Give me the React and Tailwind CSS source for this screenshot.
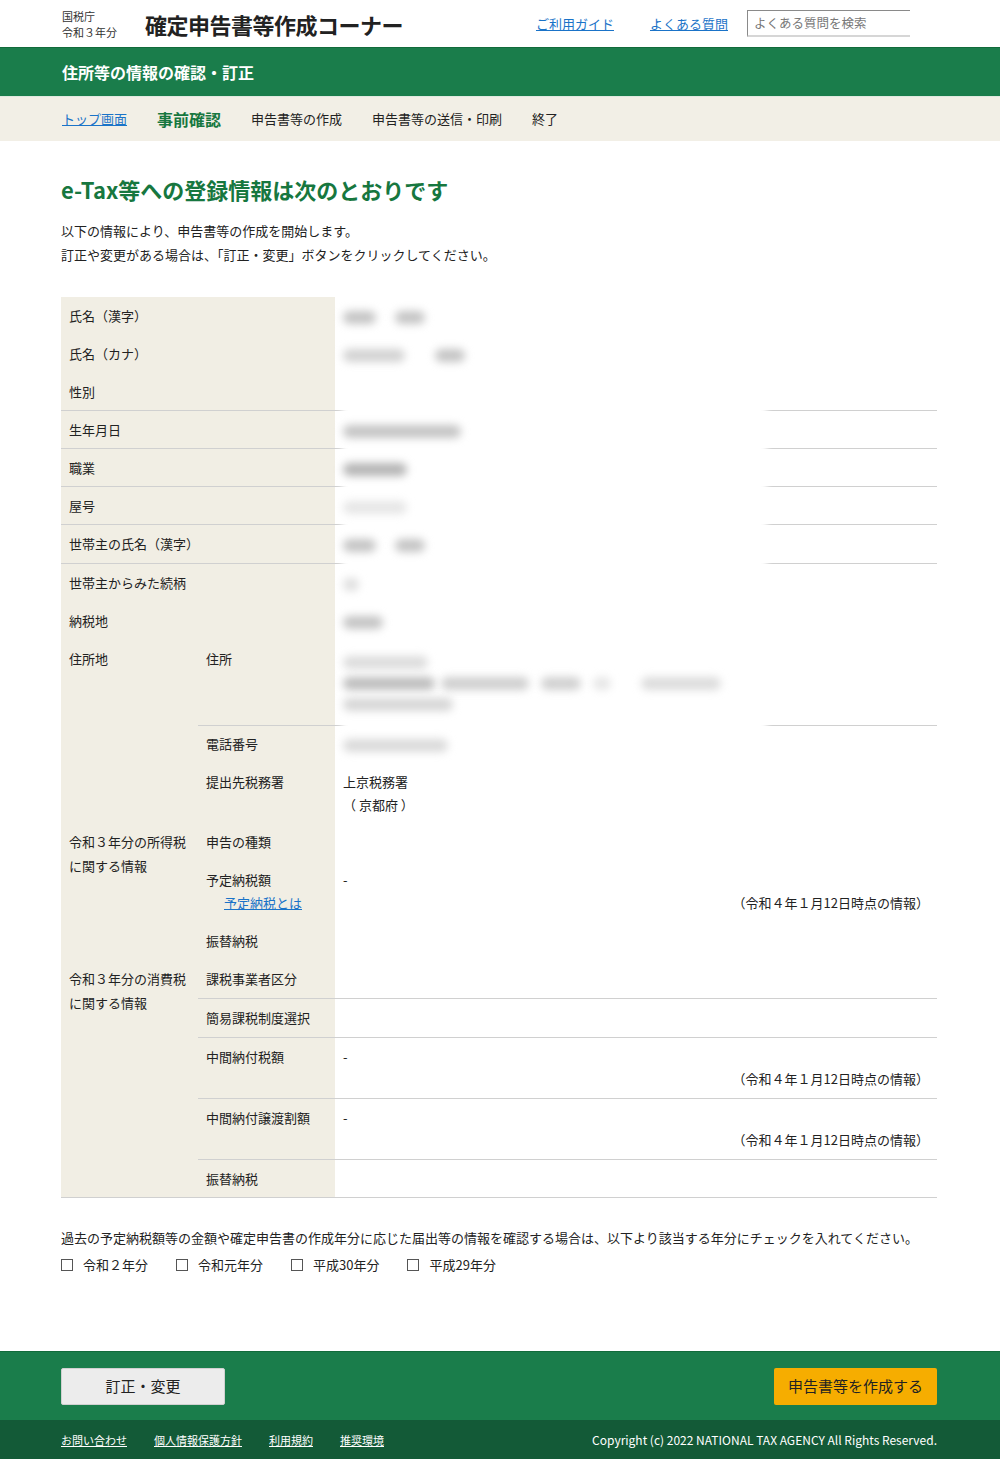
import React from 'react';

const font = { fontFamily: '"Noto Sans CJK JP", "Noto Sans", sans-serif' };

// blurred placeholder for masked personal data
const Blob = ({ w, tone = 'bg-[#c4c4c4]', ml = 'ml-0' }) => (
  <span className={`relative z-10 inline-block h-[13px] rounded-full align-middle blur-[4px] ${tone} ${ml}`} style={{ width: w }} />
);

const Info = () => (
  <div className="mt-[4px] text-right">（令和４年１月12日時点の情報）</div>
);

const App = () => {
  const th = 'bg-[#f1eee4] px-2 pt-[10px] pb-[10px] text-left align-top font-normal';
  const td = 'px-2 pt-[10px] pb-[10px] align-top';
  const line = 'border-b border-[#d0d0d0] !pb-[9px]';
  const rule = 'border-b border-[#d0d0d0]';

  return (
    <div className="w-full bg-white text-[#222] text-[13px] leading-[18px]" style={font}>
      {/* Header */}
      <header className="h-[47px] flex items-center pl-[62px] pr-[90px]">
        <div className="text-[11px] leading-[16px] text-[#333]">
          <div>国税庁</div>
          <div>令和３年分</div>
        </div>
        <div className="ml-[28px] text-[22px] font-bold tracking-[-0.5px] text-[#222]">確定申告書等作成コーナー</div>
        <a className="ml-auto text-[13px] text-[#1a73c8] underline">ご利用ガイド</a>
        <a className="ml-[36px] text-[13px] text-[#1a73c8] underline">よくある質問</a>
        <div className="ml-[19px] flex h-[27px] w-[163px] items-center border-l border-t border-b-2 border-[#8a8a8a] border-b-[#d6d6d6] pl-[6px] text-[12.5px] text-[#777]">
          よくある質問を検索
        </div>
      </header>

      {/* Page title bar */}
      <div className="h-[49px] flex items-center border-t border-[#126b3b] bg-[#1a7d4b] pl-[62px] text-[16px] font-bold text-white">
        住所等の情報の確認・訂正
      </div>
      <div className="h-[1px] bg-[#dfe9df]" />

      {/* Steps */}
      <nav className="h-[44px] flex items-center gap-[30px] bg-[#f2efe6] pl-[62px] text-[13px]">
        <a className="text-[#1a73c8] underline">トップ画面</a>
        <span className="text-[16px] font-bold text-[#17773f]">事前確認</span>
        <span>申告書等の作成</span>
        <span>申告書等の送信・印刷</span>
        <span>終了</span>
      </nav>

      <main className="ml-[61px] w-[876px] pb-[74px]">
        <h1 className="mt-[33px] text-[22px] leading-[30px] font-bold text-[#17773f]">e-Tax等への登録情報は次のとおりです</h1>
        <p className="mt-[15px] leading-[24px]">以下の情報により、申告書等の作成を開始します。</p>
        <p className="leading-[24px]">訂正や変更がある場合は、「訂正・変更」ボタンをクリックしてください。</p>

        <div className="relative mt-[30px]">
          {/* mask over personal data */}
          <div className="absolute left-[281px] top-0 h-[466px] w-[425px] bg-white blur-[3px]" />
          <table className="w-full border-collapse">
            <colgroup>
              <col className="w-[137px]" />
              <col className="w-[137px]" />
              <col />
            </colgroup>
            <tbody>
              <tr>
                <th colSpan={2} className={th}>氏名（漢字）</th>
                <td className={td}><Blob w={33} /><Blob w={30} ml="ml-[19px]" /></td>
              </tr>
              <tr>
                <th colSpan={2} className={th}>氏名（カナ）</th>
                <td className={td}><Blob w={62} tone="bg-[#d2d2d2]" /><Blob w={30} ml="ml-[30px]" /></td>
              </tr>
              <tr>
                <th colSpan={2} className={`${th} ${line}`}>性別</th>
                <td className={`${td} ${line}`}>&nbsp;</td>
              </tr>
              <tr>
                <th colSpan={2} className={`${th} ${line}`}>生年月日</th>
                <td className={`${td} ${line}`}><Blob w={118} /></td>
              </tr>
              <tr>
                <th colSpan={2} className={`${th} ${line}`}>職業</th>
                <td className={`${td} ${line}`}><Blob w={64} tone="bg-[#b4b4b4]" /></td>
              </tr>
              <tr>
                <th colSpan={2} className={`${th} ${line}`}>屋号</th>
                <td className={`${td} ${line}`}><Blob w={64} tone="bg-[#e6e6e6]" /></td>
              </tr>
              <tr>
                <th colSpan={2} className={`${th} ${rule}`}>世帯主の氏名（漢字）</th>
                <td className={`${td} ${rule}`}><Blob w={33} /><Blob w={30} ml="ml-[19px]" /></td>
              </tr>
              <tr>
                <th colSpan={2} className={th}>世帯主からみた続柄</th>
                <td className={td}><Blob w={16} tone="bg-[#dedede]" /></td>
              </tr>
              <tr>
                <th colSpan={2} className={th}>納税地</th>
                <td className={td}><Blob w={40} /></td>
              </tr>
              <tr>
                <th rowSpan={3} className={th}>住所地</th>
                <th className={`${th} ${rule}`}>住所</th>
                <td className={`${td} ${rule}`}>
                  <div className="h-[65px] leading-[21px]">
                    <div><Blob w={85} tone="bg-[#dcdcdc]" /></div>
                    <div>
                      <Blob w={92} tone="bg-[#bdbdbd]" />
                      <Blob w={88} tone="bg-[#cfcfcf]" ml="ml-[6px]" />
                      <Blob w={40} tone="bg-[#d0d0d0]" ml="ml-[12px]" />
                      <Blob w={18} tone="bg-[#e6e6e6]" ml="ml-[12px]" />
                      <Blob w={80} tone="bg-[#dcdcdc]" ml="ml-[30px]" />
                    </div>
                    <div><Blob w={110} tone="bg-[#d6d6d6]" /></div>
                  </div>
                </td>
              </tr>
              <tr>
                <th className={`${th} !pt-[9px]`}>電話番号</th>
                <td className={`${td} !pt-[9px]`}><Blob w={105} tone="bg-[#dadada]" /></td>
              </tr>
              <tr>
                <th className={th}>提出先税務署</th>
                <td className={`${td} leading-[23px] !pt-[7px] !pb-[7px]`}>
                  <div>上京税務署</div>
                  <div>（ 京都府 ）</div>
                </td>
              </tr>
              <tr>
                <th rowSpan={3} className={`${th} leading-[24px] !pt-[7px]`}>
                  令和３年分の所得税<br />に関する情報
                </th>
                <th className={th}>申告の種類</th>
                <td className={td}></td>
              </tr>
              <tr>
                <th className={th}>
                  <div>予定納税額</div>
                  <a className="mt-[5px] ml-[18px] block text-[#1a73c8] underline">予定納税とは</a>
                </th>
                <td className={td}>
                  <div>-</div>
                  <div className="mt-[5px] text-right">（令和４年１月12日時点の情報）</div>
                </td>
              </tr>
              <tr>
                <th className={th}>振替納税</th>
                <td className={td}></td>
              </tr>
              <tr>
                <th rowSpan={5} className={`${th} leading-[24px] !pt-[7px] ${rule}`}>
                  令和３年分の消費税<br />に関する情報
                </th>
                <th className={`${th} ${rule}`}>課税事業者区分</th>
                <td className={`${td} ${rule}`}></td>
              </tr>
              <tr>
                <th className={`${th} ${rule}`}>簡易課税制度選択</th>
                <td className={`${td} ${rule}`}></td>
              </tr>
              <tr>
                <th className={`${th} ${rule}`}>中間納付税額</th>
                <td className={`${td} ${rule}`}>
                  <div>-</div>
                  <Info />
                </td>
              </tr>
              <tr>
                <th className={`${th} ${rule}`}>中間納付譲渡割額</th>
                <td className={`${td} ${rule}`}>
                  <div>-</div>
                  <Info />
                </td>
              </tr>
              <tr>
                <th className={`${th} ${line}`}>振替納税</th>
                <td className={`${td} ${line}`}></td>
              </tr>
            </tbody>
          </table>
        </div>

        <p className="mt-[28px] leading-[24px]">
          過去の予定納税額等の金額や確定申告書の作成年分に応じた届出等の情報を確認する場合は、以下より該当する年分にチェックを入れてください。
        </p>
        <div className="mt-[3px] flex items-center gap-[28px] leading-[24px]">
          {['令和２年分', '令和元年分', '平成30年分', '平成29年分'].map((y) => (
            <label key={y} className="flex items-center gap-[10px]">
              <span className="inline-block h-[12px] w-[12px] border border-[#555] bg-white" />
              <span>{y}</span>
            </label>
          ))}
        </div>
      </main>

      {/* Action bar */}
      <div className="h-[69px] flex items-center justify-between border-t border-[#126b3b] bg-[#1a7d4b] pl-[61px] pr-[63px]">
        <button className="h-[37px] w-[164px] rounded-[2px] border border-[#d0d0d0] bg-[#ececec] text-[15px] text-[#222]">
          訂正・変更
        </button>
        <button className="h-[37px] w-[163px] rounded-[2px] bg-[#f6ad00] text-[15px] text-[#222]">
          申告書等を作成する
        </button>
      </div>

      {/* Footer */}
      <footer className="h-[39px] flex items-center bg-[#135a37] pl-[61px] pr-[63px] text-white">
        <a className="text-[11px] underline">お問い合わせ</a>
        <a className="ml-[27px] text-[11px] underline">個人情報保護方針</a>
        <a className="ml-[27px] text-[11px] underline">利用規約</a>
        <a className="ml-[27px] text-[11px] underline">推奨環境</a>
        <span className="ml-auto text-[12px]">Copyright (c) 2022 NATIONAL TAX AGENCY All Rights Reserved.</span>
      </footer>
    </div>
  );
};

export default App;
